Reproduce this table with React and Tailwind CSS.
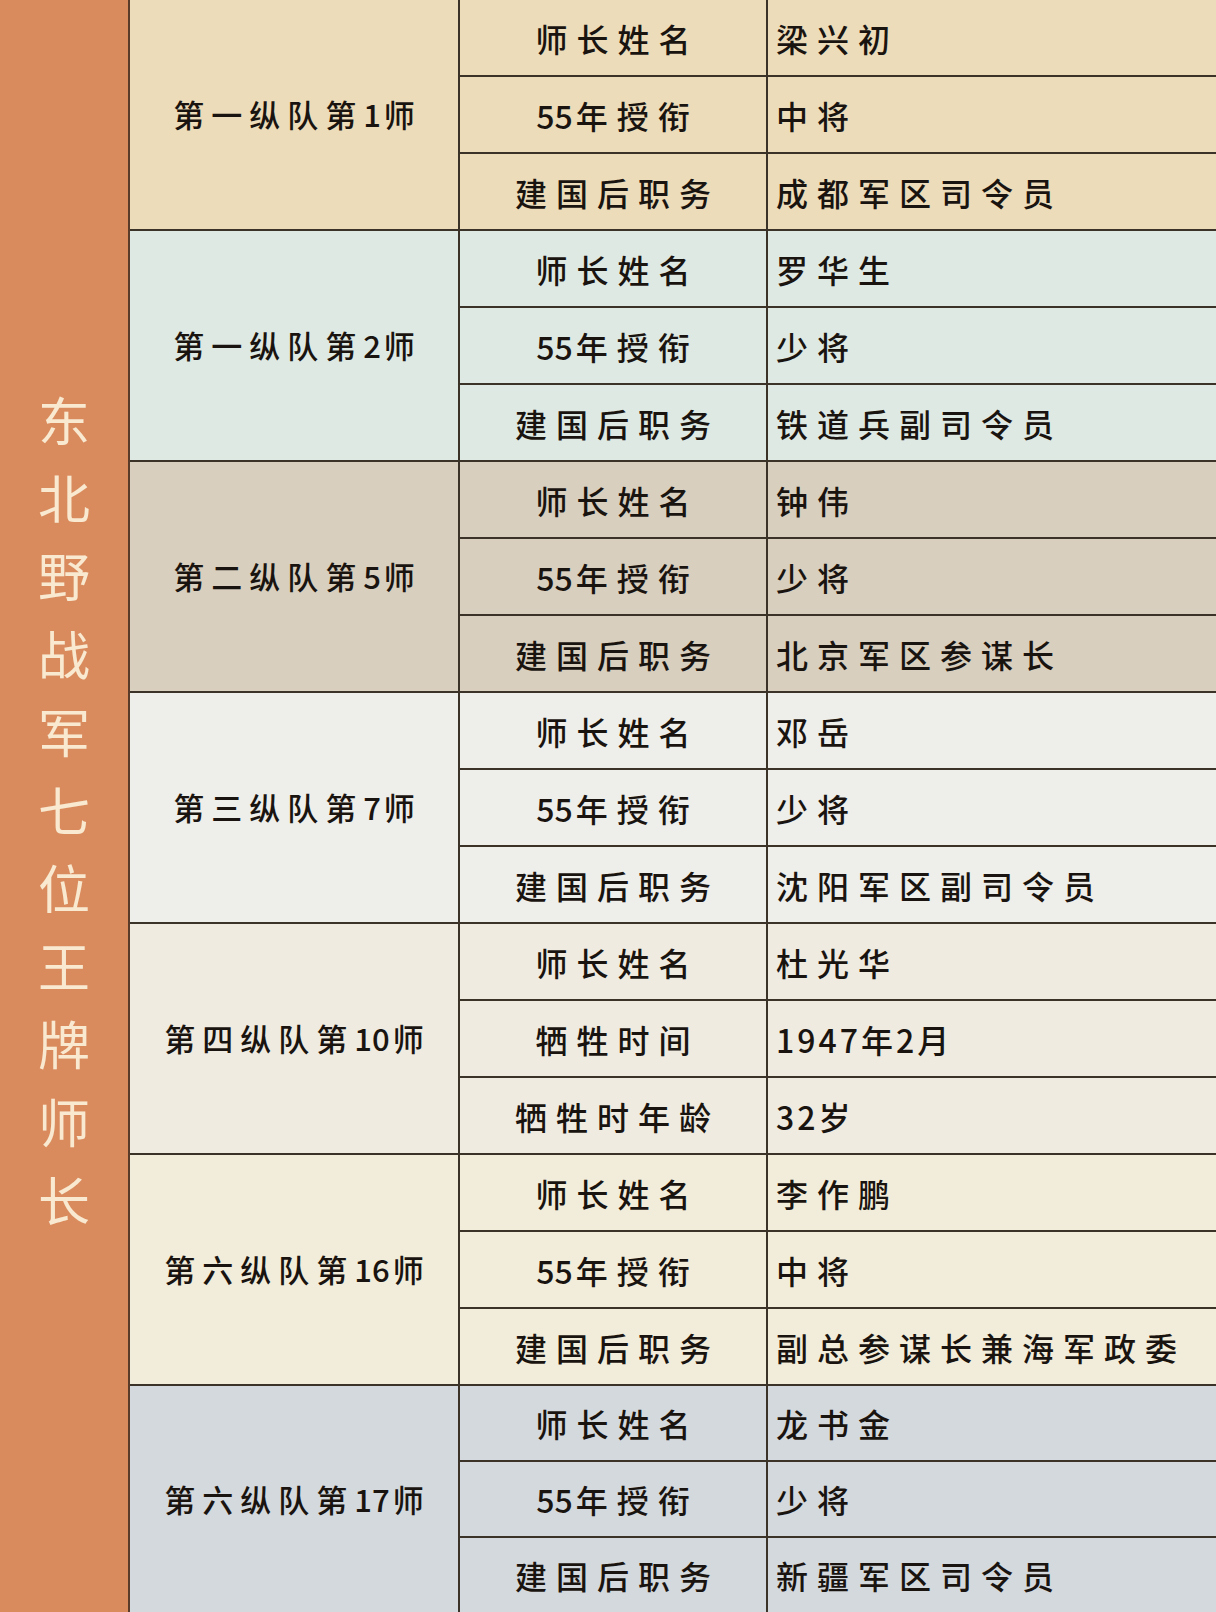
const groups = [
  {
    unit: "第一纵队第1师",
    bg: "bg-[#ecdcba]",
    rows: [
      ["师长姓名", "梁兴初"],
      ["55年授衔", "中将"],
      ["建国后职务", "成都军区司令员"],
    ],
  },
  {
    unit: "第一纵队第2师",
    bg: "bg-[#dfe9e3]",
    rows: [
      ["师长姓名", "罗华生"],
      ["55年授衔", "少将"],
      ["建国后职务", "铁道兵副司令员"],
    ],
  },
  {
    unit: "第二纵队第5师",
    bg: "bg-[#d8cfbf]",
    rows: [
      ["师长姓名", "钟伟"],
      ["55年授衔", "少将"],
      ["建国后职务", "北京军区参谋长"],
    ],
  },
  {
    unit: "第三纵队第7师",
    bg: "bg-[#eeeeea]",
    rows: [
      ["师长姓名", "邓岳"],
      ["55年授衔", "少将"],
      ["建国后职务", "沈阳军区副司令员"],
    ],
  },
  {
    unit: "第四纵队第10师",
    bg: "bg-[#efebe1]",
    rows: [
      ["师长姓名", "杜光华"],
      ["牺牲时间", "1947年2月"],
      ["牺牲时年龄", "32岁"],
    ],
  },
  {
    unit: "第六纵队第16师",
    bg: "bg-[#f2edda]",
    rows: [
      ["师长姓名", "李作鹏"],
      ["55年授衔", "中将"],
      ["建国后职务", "副总参谋长兼海军政委"],
    ],
  },
  {
    unit: "第六纵队第17师",
    bg: "bg-[#d4d9dd]",
    rows: [
      ["师长姓名", "龙书金"],
      ["55年授衔", "少将"],
      ["建国后职务", "新疆军区司令员"],
    ],
  },
];

const title = "东北野战军七位王牌师长".split("");

// digits sit tight together, only the last one of a run keeps a small gap
function Spaced({ text }) {
  const chars = text.split("");
  return chars.map((c, i) => {
    const isDigit = /[0-9]/.test(c);
    const nextDigit = /[0-9]/.test(chars[i + 1] || "");
    if (isDigit) {
      return (
        <span key={i} className={nextDigit ? "tracking-[0px]" : "tracking-[3px]"}>
          {c}
        </span>
      );
    }
    return <span key={i}>{c}</span>;
  });
}

export default function App() {
  return (
    <div
      className="flex w-[1216px] h-[1612px] overflow-hidden text-[#1a1410]"
      style={{ fontFamily: '"Noto Sans CJK SC", "Noto Sans", sans-serif' }}
    >
      <div className="w-[130px] shrink-0 bg-[#d98b5e] border-r-2 border-[#5a3a28] flex flex-col items-center justify-center pt-[6px]">
        {title.map((c, i) => (
          <div key={i} className="text-[52px] leading-[78px] text-[#f8e9d0] font-normal">
            {c}
          </div>
        ))}
      </div>
      <div className="flex-1 flex flex-col">
        {groups.map((g, gi) => (
          <div
            key={gi}
            className={`flex ${g.bg} ${gi === groups.length - 1 ? "flex-1" : "h-[231px] border-b-2 border-[#3b3228]"}`}
          >
            <div className="w-[330px] shrink-0 flex items-center justify-center border-r-2 border-[#3b3228] text-[31px] font-medium tracking-[7px] pl-[7px]">
              <Spaced text={g.unit} />
            </div>
            <div className="flex-1 flex flex-col">
              {g.rows.map((r, ri) => (
                <div
                  key={ri}
                  className={`flex-1 flex ${ri < 2 ? "border-b-2 border-[#3b3228]" : ""}`}
                >
                  <div className="w-[308px] shrink-0 flex items-center justify-center border-r-2 border-[#3b3228] text-[32px] font-medium tracking-[9px] pl-[9px]">
                    <Spaced text={r[0]} />
                  </div>
                  <div
                    className={`flex-1 flex items-center pl-[8px] text-[32px] font-medium ${/[0-9]/.test(r[1]) ? "tracking-[3px]" : "tracking-[9px]"}`}
                  >
                    {r[1]}
                  </div>
                </div>
              ))}
            </div>
          </div>
        ))}
      </div>
    </div>
  );
}
